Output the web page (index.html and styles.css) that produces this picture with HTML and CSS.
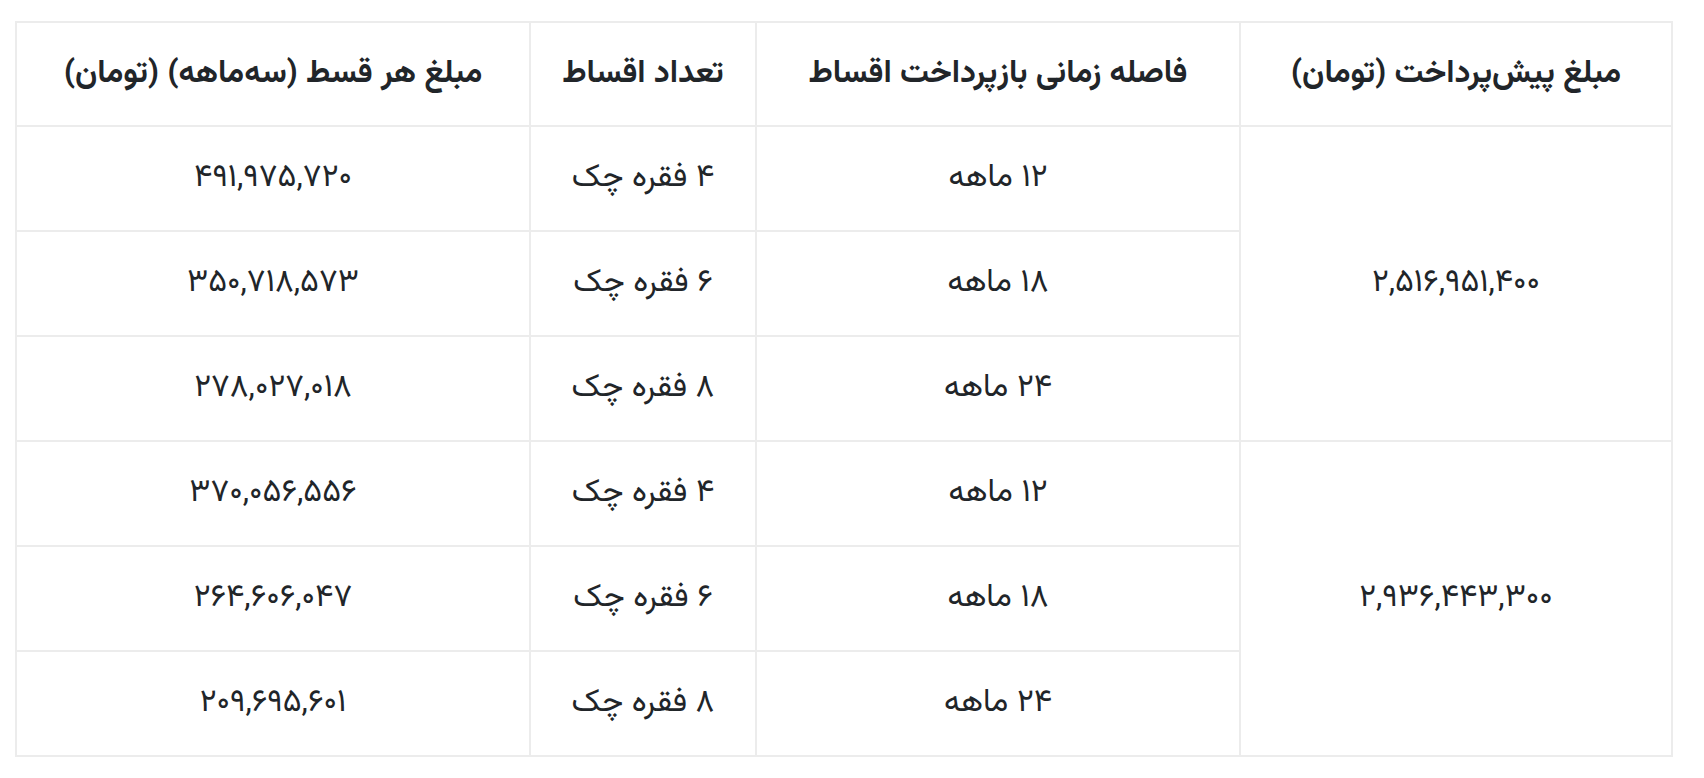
FILE: index.html
```html
<!DOCTYPE html>
<html lang="fa" dir="rtl">
<head>
<meta charset="utf-8">
<title>جدول اقساط</title>
<link rel="stylesheet" href="styles.css">
</head>
<body>
<div class="wrap">
<table class="plan">
<colgroup>
<col class="c-pre">
<col class="c-period">
<col class="c-count">
<col class="c-amount">
</colgroup>
<thead>
<tr>
<th>مبلغ پیش‌پرداخت (تومان)</th>
<th>فاصله زمانی بازپرداخت اقساط</th>
<th>تعداد اقساط</th>
<th>مبلغ هر قسط (سه‌ماهه) (تومان)</th>
</tr>
</thead>
<tbody>
<tr>
<td rowspan="3">۲,۵۱۶,۹۵۱,۴۰۰</td>
<td>۱۲ ماهه</td>
<td>۴ فقره چک</td>
<td>۴۹۱,۹۷۵,۷۲۰</td>
</tr>
<tr>
<td>۱۸ ماهه</td>
<td>۶ فقره چک</td>
<td>۳۵۰,۷۱۸,۵۷۳</td>
</tr>
<tr>
<td>۲۴ ماهه</td>
<td>۸ فقره چک</td>
<td>۲۷۸,۰۲۷,۰۱۸</td>
</tr>
<tr>
<td rowspan="3">۲,۹۳۶,۴۴۳,۳۰۰</td>
<td>۱۲ ماهه</td>
<td>۴ فقره چک</td>
<td>۳۷۰,۰۵۶,۵۵۶</td>
</tr>
<tr>
<td>۱۸ ماهه</td>
<td>۶ فقره چک</td>
<td>۲۶۴,۶۰۶,۰۴۷</td>
</tr>
<tr>
<td>۲۴ ماهه</td>
<td>۸ فقره چک</td>
<td>۲۰۹,۶۹۵,۶۰۱</td>
</tr>
</tbody>
</table>
</div>
</body>
</html>
```
FILE: styles.css
```css
html, body {
  margin: 0;
  padding: 0;
  background: #ffffff;
}

body {
  font-family: "Vazirmatn", "Vazir", "Noto Sans Arabic", "DejaVu Sans", sans-serif;
  color: #212529;
}

.wrap {
  padding: 21px 31px 0 17px;
}

.plan {
  width: 1656px;
  border-collapse: collapse;
  table-layout: fixed;
  direction: rtl;
}

.c-pre { width: 432px; }
.c-period { width: 484px; }
.c-count { width: 226px; }
.c-amount { width: 514px; }

.plan th,
.plan td {
  border: 2px solid #ececec;
  padding: 0 10px;
  text-align: center;
  vertical-align: middle;
  line-height: 1.4;
}

.plan th {
  height: 102px;
  font-weight: bold;
  font-size: 32px;
}

.plan td {
  height: 103px;
  font-weight: normal;
  font-size: 32px;
}
```
